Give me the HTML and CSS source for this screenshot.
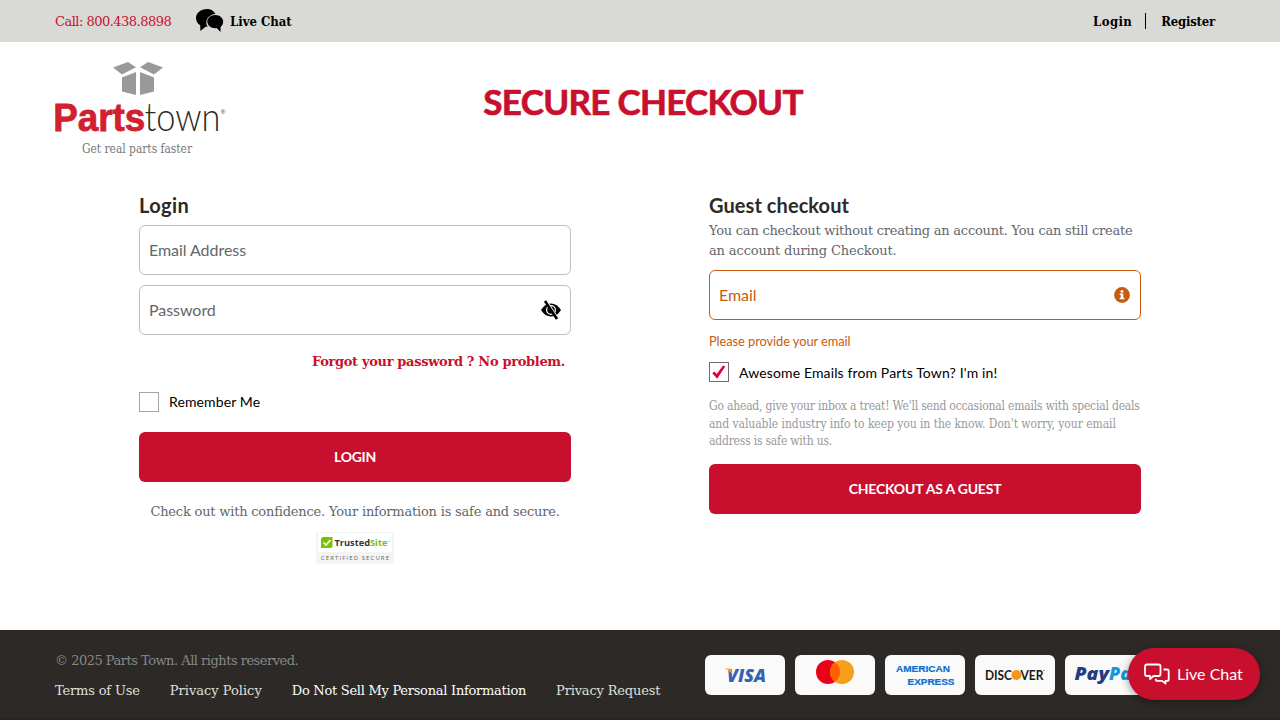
FILE: index.html
```html
<!DOCTYPE html>
<html lang="en">
<head>
<meta charset="utf-8">
<title>Secure Checkout | Parts Town</title>
<link rel="stylesheet" href="styles.css">
</head>
<body>
<div class="topbar">
  <a class="call">Call: 800.438.8898</a>
  <a class="chat-link">
    <svg width="28" height="24" viewBox="0 0 28 24"><path d="M11 0C4.800 0 0 4 0 9c0 3 1.700 5.700 4.200 7.300L4.400 22l5.200-4.200h2c-.9-1.300-1.300-2.700-1.300-4.100 0-4.600 4-8.400 9.200-8.700C17.900 2 14.800 0 11 0z"/><path d="M19.300 5.900c-4.500 0-8 2.900-8 6.600s3.500 6.700 8 6.700l1.400-.1 3.800 3.900.2-5.300c1.500-1.200 2.500-3 2.500-5.200 0-3.700-3.500-6.600-7.900-6.600z"/></svg>
    <span>Live Chat</span>
  </a>
  <nav class="account"><a class="account-login">Login</a><i class="divider"></i><a class="account-register">Register</a></nav>
</div>

<header class="header">
  <svg class="logo" width="172" height="98" viewBox="0 0 172 98">
    <g fill="#97999b">
      <path d="M58 7.500 73 2l8 5.300-14 7.200z"/><path d="M108 7.500 93 2l-8 5.300 14 7.200z"/>
      <path d="M67 17.500 81 12v23l-14-3.500z"/><path d="M99 17.500 85 12v23l14-3.500z"/>
    </g>
    <text class="logo-parts" x="-1.800" y="71" textLength="92" lengthAdjust="spacingAndGlyphs">Parts</text>
    <text class="logo-town" x="89.500" y="71" textLength="76" lengthAdjust="spacingAndGlyphs">town</text>
    <text class="logo-reg" x="165.700" y="54">®</text>
    <text class="logo-tag" x="27" y="93" textLength="110" lengthAdjust="spacingAndGlyphs">Get real parts faster</text>
  </svg>
  <h1 class="title">SECURE CHECKOUT</h1>
</header>

<main class="main">
  <section class="panel">
    <h2 class="heading heading-login">Login</h2>
    <div class="field">Email Address</div>
    <div class="field field-password">Password
      <svg width="22" height="20" viewBox="0 0 22 20"><path d="M1 10Q5 3.500 11 3.500T21 10Q17 16.500 11 16.500T1 10z"/><circle cx="11" cy="10" r="4.400" fill="none" stroke="#fff" stroke-width="1.200"/><path d="M6.300 1.500 17.300 18.500" stroke="#fff" stroke-width="3"/><path d="M5 1 17 19" stroke="#000" stroke-width="2.600"/></svg>
    </div>
    <a class="forgot">Forgot your password ? No problem.</a>
    <label class="check"><span class="box"></span><span class="check-remember">Remember Me</span></label>
    <div class="button button-login">LOGIN</div>
    <p class="confidence">Check out with confidence. Your information is safe and secure.</p>
    <svg class="trusted" width="78" height="32" viewBox="0 0 78 32">
      <rect width="78" height="32" rx="2" fill="#f3f4f4"/><rect x="2" y="1" width="74" height="19" fill="#fff"/>
      <path d="M7 5h9.500v8.500q0 2.500-2.500 2.500H5V7.500Q5 5 7 5z" fill="#7ac200"/><path d="m7.500 10.500 2.500 2.500 4.500-5" fill="none" stroke="#fff" stroke-width="1.600"/>
      <text class="ts-name" x="18.500" y="14" textLength="35.500" lengthAdjust="spacingAndGlyphs">Trusted</text>
      <text class="ts-name ts-site" x="54" y="14" textLength="17.500" lengthAdjust="spacingAndGlyphs">Site</text>
      <text class="ts-tm" x="71.500" y="11">™</text>
      <text class="ts-sub" x="5" y="28" textLength="68">CERTIFIED SECURE</text>
    </svg>
  </section>

  <section class="panel">
    <h2 class="heading">Guest checkout</h2>
    <p class="intro">You can checkout without creating an account. You can still create<br><span class="intro-end">an account during Checkout.</span></p>
    <div class="field field-error">Email
      <svg width="16" height="16" viewBox="0 0 16 16"><circle cx="8" cy="8" r="7.900" fill="#c75b12"/><path d="M6.600 3.200h2.700v2.200H6.600zM5.700 6.500h3.600v4.200h1.100v1.600H5.700v-1.600h1.100V8.100H5.700z" fill="#fff"/></svg>
    </div>
    <p class="error">Please provide your email</p>
    <label class="check check-guest"><span class="box box-on"><svg width="20" height="20" viewBox="0 0 20 20"><path d="M2.500 11.300 5 9.500 7.500 12.300 14.500 2.800 17 4 8 17.500z" fill="#e0003c"/></svg></span><span class="check-emails">Awesome Emails from Parts Town? I'm in!</span></label>
    <p class="note">Go ahead, give your inbox a treat! We'll send occasional emails with special deals<br><span class="note-wide">and valuable industry info to keep you in the know. Don't worry, your email</span><br>address is safe with us.</p>
    <div class="button">CHECKOUT AS A GUEST</div>
  </section>
</main>

<footer class="footer">
  <div class="legal">
    <p class="copyright">© 2025 Parts Town. All rights reserved.</p>
    <nav class="links"><a>Terms of Use</a><a class="link-policy">Privacy Policy</a><a class="link-sell">Do Not Sell My Personal Information</a><a>Privacy Request</a></nav>
  </div>
  <div class="cards">
    <svg class="card" viewBox="0 0 80 40"><text class="visa" x="22" y="26.500" textLength="39" lengthAdjust="spacingAndGlyphs">VISA</text><path d="M19 13.500h6.500l2 5-1.500-.5Q24 14.500 19 13.500z" fill="#f9a51a"/></svg>
    <svg class="card" viewBox="0 0 80 40"><circle cx="33" cy="17" r="12" fill="#eb001b"/><circle cx="47" cy="17" r="12" fill="#f79e1b"/><path d="M40 7.250a12 12 0 0 1 0 19.500 12 12 0 0 1 0-19.500z" fill="#ff5f00"/><text class="mc" x="22" y="36" textLength="36">mastercard</text></svg>
    <svg class="card" viewBox="0 0 80 40"><text class="amex" x="11" y="17" textLength="54" lengthAdjust="spacingAndGlyphs">AMERICAN</text><text class="amex" x="22.500" y="30" textLength="47" lengthAdjust="spacingAndGlyphs">EXPRESS</text></svg>
    <svg class="card" viewBox="0 0 80 40"><circle cx="41.500" cy="20" r="5" fill="#f7941d"/><text class="disc" x="10" y="25" textLength="27" lengthAdjust="spacingAndGlyphs">DISC</text><text class="disc" x="45.500" y="25" textLength="23" lengthAdjust="spacingAndGlyphs">VER</text><circle cx="69" cy="15.500" r=".5"/></svg>
    <svg class="card" viewBox="0 0 80 40"><text class="pay" x="9.500" y="25" textLength="34.500" lengthAdjust="spacingAndGlyphs">Pay</text><text class="pay pal" x="44" y="25" textLength="28" lengthAdjust="spacingAndGlyphs">Pal</text></svg>
  </div>
</footer>

<div class="pill">
  <svg width="26" height="22" viewBox="0 0 26 22" fill="none" stroke="#fff" stroke-width="1.800" stroke-linejoin="round"><path d="M3 1.500h11.500q2 0 2 2v7.500q0 2-2 2H9.500L6 16v-3H3q-2 0-2-2V3.500q0-2 2-2z"/><path d="M19.500 6.500H23q1.700 0 1.700 1.700v8q0 1.700-1.700 1.700h-1.500V20.500L18 17.900h-4.500q-1.700 0-1.700-1.700v-.4"/></svg>
  <span>Live Chat</span>
</div>
</body>
</html>
```
FILE: styles.css
```css
* { box-sizing: border-box; }
body { margin: 0; height: 720px; overflow: hidden; display: flex; flex-direction: column; background: #fff; color: #000; font: 13px/20px "DejaVu Serif", serif; }
h1, h2, p { margin: 0; }

.topbar { height: 42px; flex: none; background: #d9dad5; display: flex; align-items: center; padding: 0 65px 0 55px; }
.call { padding-top: 2px; color: #c8102e; letter-spacing: -.52px; width: 141px; white-space: nowrap; }
.chat-link { display: flex; align-items: center; gap: 6px; font: bold 13px/20px "DejaVu Serif Condensed", "DejaVu Serif", serif; }
.chat-link span { padding-top: 2px; }
.account { margin-left: auto; display: flex; align-items: center; font: bold 13px/20px "DejaVu Serif Condensed", "DejaVu Serif", serif; }
.account a { padding-top: 2px; }
.account-login { letter-spacing: .4px; }
.account-register { letter-spacing: -.2px; }
.divider { width: 1px; height: 16px; background: #000; margin: 0 15px 0 13px; }

.header { height: 151px; flex: none; display: grid; grid-template-columns: 172px 1fr 172px; padding: 18px 49px 0 55px; }
.logo { overflow: visible; }
.logo-parts { font: bold 39px "Liberation Sans", sans-serif; fill: #d2202f; stroke: #d2202f; stroke-width: .8px; }
.logo-town { font: 300 40px Lato, sans-serif; fill: #2d2926; }
.logo-reg { font: 6px "Liberation Sans", sans-serif; fill: #2d2926; }
.logo-tag { font: 12px "DejaVu Serif", serif; fill: #75787b; }
.title { justify-self: center; margin-top: 19px; height: 44px; font: bold 35px/44px Lato, sans-serif; letter-spacing: -.7px; color: #c8102e; -webkit-text-stroke: .7px #c8102e; }

.main { flex: 1; display: grid; grid-template-columns: 432px 432px; column-gap: 138px; padding-left: 139px; }
.panel { display: flex; flex-direction: column; }
.heading { font: bold 20px/24px Lato, sans-serif; letter-spacing: .07px; color: #2d2926; }
.heading-login { margin-bottom: 8px; letter-spacing: .4px; }
.field { height: 50px; flex: none; display: flex; align-items: center; justify-content: space-between; border: 1px solid #bfbfbf; border-radius: 6px; padding: 0 9px; font: 16px/20px Lato, sans-serif; letter-spacing: -.05px; color: #63666a; }
.field + .field { margin-top: 10px; }
.field-password { padding-right: 8px; }
.field-error { margin-top: 10px; border-color: #c75b12; color: #c75b12; padding-right: 10px; }
.forgot { align-self: flex-end; margin: 17px 6px 0 0; font-weight: bold; letter-spacing: -.33px; color: #c8102e; }
.check { display: flex; align-items: center; gap: 10px; margin-top: 19.500px; height: 20px; font: 14px/20px Lato, sans-serif; }
.check-guest { margin-top: 11px; }
.check-remember { letter-spacing: .11px; padding-top: 1px; }
.check-emails { letter-spacing: .13px; padding-top: 1px; }
.box { width: 20px; height: 20px; border: 1px solid #a5a5a5; display: flex; align-items: center; justify-content: center; }
.box-on { border-color: #78686d; }
.button { height: 50px; flex: none; margin-top: 13.500px; border-radius: 6px; background: #c8102e; color: #fff; font: bold 14px/50px Lato, sans-serif; letter-spacing: -.2px; text-align: center; }
.button-login { margin-top: 20px; letter-spacing: -.3px; }
.confidence { margin-top: 20.500px; text-align: center; letter-spacing: -.2px; color: #63666a; white-space: nowrap; }
.trusted { align-self: center; margin-top: 9.500px; }
.ts-name { font: bold 9.500px "Open Sans", sans-serif; fill: #30373b; }
.ts-site { fill: #7ac200; }
.ts-tm { font: 3.500px "Open Sans", sans-serif; fill: #7ac200; }
.ts-sub { font: 6px "Open Sans", sans-serif; fill: #5f6468; }
.intro { margin-top: 4px; letter-spacing: -.24px; color: #63666a; white-space: nowrap; }
.intro-end { letter-spacing: -.13px; }
.error { margin-top: 11px; font: 12.800px/20px Lato, sans-serif; letter-spacing: -.05px; color: #c75b12; }
.field-error { margin-top: 9px; }
.note { margin-top: 16px; font: 12px/17.500px "DejaVu Serif Condensed", "DejaVu Serif", serif; letter-spacing: -.2px; color: #97999b; white-space: nowrap; }
.note-wide { letter-spacing: -.06px; }

.footer { height: 90px; flex: none; background: #2d2926; border-bottom: 1px solid #3d1a1f; display: flex; padding: 21px 0 0 55px; }
.legal { width: 650px; flex: none; white-space: nowrap; }
.copyright { letter-spacing: -.5px; color: #85898b; }
.links { display: flex; gap: 30px; margin-top: 10px; letter-spacing: -.17px; color: #dfe0dc; }
.link-policy { letter-spacing: 0; }
.link-sell { letter-spacing: -.27px; color: #fff; }
.cards { display: flex; gap: 10px; padding-top: 4px; }
.card { width: 80px; height: 40px; flex: none; border-radius: 6px; background: #fafafa; }
.visa { font: italic 800 18px "Open Sans", sans-serif; fill: #3862ae; }
.mc { font: 7px Lato, sans-serif; fill: #fff; }
.amex { font: bold 9.500px "Liberation Sans", sans-serif; fill: #0870ce; stroke: #0870ce; stroke-width: .2px; }
.disc { font: bold 13.500px Lato, sans-serif; fill: #1a1a1a; }
.pay { font: italic 800 18px "Open Sans", sans-serif; fill: #263b80; }
.pal { fill: #139ad6; }

.pill { position: absolute; left: 1128px; top: 648px; width: 132px; height: 52px; border-radius: 26px; background: #c8102e; color: #fff; display: flex; align-items: center; gap: 7px; padding-left: 16px; font: 16px/20px Lato, sans-serif; box-shadow: 0 2px 8px rgba(0, 0, 0, .4); }
```
